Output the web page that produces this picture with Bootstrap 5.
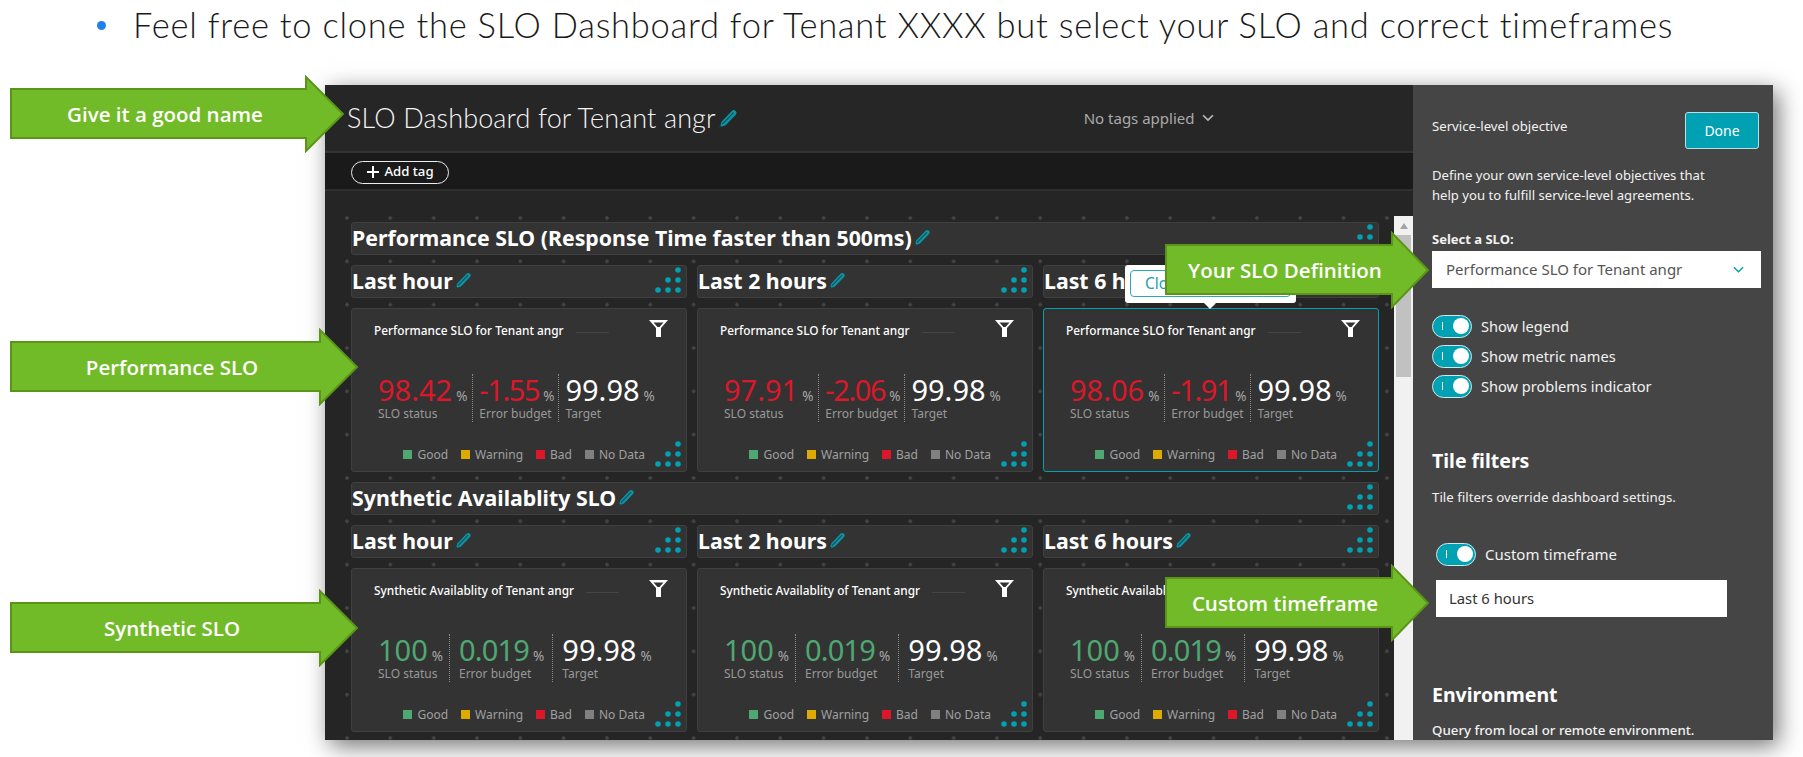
<!DOCTYPE html>
<html lang="en">
<head>
  <meta charset="UTF-8">
  <title>SLO Dashboard for Tenant</title>
  <link href="https://cdn.jsdelivr.net/npm/bootstrap@5.3.3/dist/css/bootstrap.min.css" rel="stylesheet">
  <style>
    body { font-family: "Noto Sans", sans-serif; background: #fff; width: 1803px; height: 757px; overflow: hidden; }
    .slide { position: relative; width: 1803px; height: 757px; overflow: hidden; }

    .slide-title { height: 85px; padding: 5px 0 0 97px; font-family: "Lato", sans-serif; font-weight: 300; font-size: 34.5px; line-height: 40px; color: #1a1a1a; letter-spacing: .75px; }
    .slide-bullet { width: 9px; height: 9px; border-radius: 50%; background: #1f7fef; margin: 16px 27px 0 0; }

    .dash-window { width: 1448px; height: 655px; margin-left: 325px; box-shadow: 5px 6px 22px rgba(0,0,0,.55); overflow: hidden; }
    .dash-main { width: 1088px; background: #252525; }
    .dash-head { height: 68px; background: #262626; border-bottom: 2px solid #333; padding: 0 0 0 22px; }
    .dash-name { font-family: "Lato", sans-serif; font-weight: 300; font-size: 27px; color: #f4f4f4; letter-spacing: .12px; }
    .dash-head .pencil { width: 19px; height: 19px; margin-left: 3px; }
    .tags-label { font-size: 15px; color: #aaa; margin-left: 346px; }
    .dash-tagbar { height: 38px; background: #1a1a1a; border-bottom: 2px solid #2f2f2f; padding: 2px 0 0 26px; }
    .add-tag { height: 23px; width: 98px; border: 1px solid #eee; border-radius: 12px; color: #fff; font-size: 13.2px; font-weight: 500; }

    .dash-body { height: 549px; }
    .board { width: 1069px; padding: 31px 0 0 26px; overflow: hidden;
      background-color: #252525;
      background-image: radial-gradient(circle, #444 1.5px, transparent 2px);
      background-size: 43.33px 43.33px; background-position: .33px 5.33px; }
    .tile-grid { display: grid; grid-template-columns: repeat(3, 336px); gap: 10px; }
    .tile-box { position: relative; background: #333; border: 1px solid #404040; border-radius: 3px; }
    .tile-wide { grid-column: 1 / 4; }
    .tile-label { height: 33px; padding: 0 0 2px 0; color: #fff; font-size: 21.3px; font-weight: 700; white-space: nowrap; }
    .tile-slo { height: 164px; padding: 12px 0 8px 26px; }
    .tile-active { border-color: #00a1b2; }
    .grip { position: absolute; right: 5px; bottom: 4px; width: 26px; height: 26px; }
    .pencil { width: 17px; height: 17px; margin-left: 2px; flex: none; }

    .slo-head { height: 20px; margin-left: -4px; color: #fff; font-size: 11.85px; font-weight: 500; white-space: nowrap; }
    .slo-rule { width: 33px; height: 1px; background: #454545; margin: 3px 0 0 12px; }
    .slo-funnel { position: absolute; right: 18px; top: 11px; width: 19px; height: 17px; }
    .slo-stats { margin-top: 33px; height: 48px; }
    .stat-cell { padding-right: 5px; padding-left: 6px; border-right: 1px dotted #8a8a8a; }
    .stat-cell:first-child { padding-left: 0; }
    .stat-cell:nth-child(2) { padding-right: 4px; }
    .stat-cell:last-child { border-right: 0; }
    .stats-good .stat-cell, .stats-good .stat-cell:nth-child(2) { padding-left: 9px; padding-right: 8px; }
    .stats-good .stat-cell:first-child { padding-left: 0; padding-right: 6px; }
    .stat-num { font-size: 29px; line-height: 32px; white-space: nowrap; }
    .stat-cell:nth-child(2) .stat-num { letter-spacing: -1.4px; }
    .stats-good .stat-cell:nth-child(2) .stat-num { letter-spacing: -.8px; }
    .stat-cell .stat-num .stat-unit { font-size: 13.5px; line-height: 1; color: #a8a8a8; margin-left: 4px; letter-spacing: 0; }
    .stat-name { font-size: 12px; line-height: 16px; color: #999; white-space: nowrap; }
    .is-bad { color: #dc172a; }
    .is-good { color: #4fa871; }
    .is-plain { color: #fff; }
    .slo-legend { margin-top: auto; height: 16px; padding-right: 41px; font-size: 12px; color: #a0a0a0; gap: 13px; }
    .swatch { display: inline-block; width: 9px; height: 9px; margin-right: 5px; }

    .tile-pop { position: absolute; left: 81px; top: -44px; width: 171px; height: 38px; background: #fff; border-radius: 3px; padding: 5px; z-index: 2; }
    .tile-pop::after { content: ""; position: absolute; left: 79px; bottom: -6px; border: 6px solid transparent; border-top-color: #fff; border-bottom: 0; }
    .tile-pop-btn { height: 27px; border: 1.5px solid #29a9ba; border-radius: 4px; color: #1f9fb0; font-size: 15.5px; padding-left: 14px; line-height: 24px; }

    .scroll-track { width: 19px; margin-top: 25px; background: #f1f1f1; }
    .scroll-up { height: 19px; }
    .scroll-up::before { content: ""; border: 4px solid transparent; border-bottom: 6px solid #a3a3a3; border-top: 0; }
    .scroll-thumb { height: 142px; margin: 0 2px; background: #c1c1c1; }

    .side-panel { width: 360px; background: #454545; color: #f2f2f2; padding: 27px 14px 0 19px; font-size: 13.3px; overflow: hidden; }
    .side-top { height: 37px; }
    .side-top-label { margin-bottom: 7px; font-size: 13.2px; }
    .btn-done { width: 74px; height: 37px; padding: 0; background: #00a1b2; border: 1px solid #b9e0e5; border-radius: 3px; color: #fff; font-size: 14px; }
    .side-text { line-height: 19.5px; margin: 0; }
    .side-intro { margin-top: 17px; font-size: 13.1px; }
    .side-label { font-weight: 700; font-size: 13px; margin-top: 25px; line-height: 18px; }
    .slo-select { height: 37px; margin-top: 3px; width: 329px; border: 0; border-radius: 0; padding: 0 14px; font-size: 15px; color: #555;
      background-image: url("data:image/svg+xml,%3csvg xmlns='http://www.w3.org/2000/svg' viewBox='0 0 12 8'%3e%3cpath fill='none' stroke='%2300a1b2' stroke-width='1.6' d='M1 1l5 5 5-5'/%3e%3c/svg%3e");
      background-position: right 17px center; background-size: 11px 8px; }
    .toggle-row { height: 23px; margin-bottom: 7px; gap: 9px; font-size: 14.6px; }
    .dt-toggle { position: relative; width: 40px; height: 23px; border-radius: 12px; background: #00a1b2; border: 1.5px solid #cfe9ec; flex: none; }
    .dt-toggle::before { content: ""; position: absolute; left: 9px; top: 6px; width: 1px; height: 8px; background: #fff; }
    .dt-toggle::after { content: ""; position: absolute; right: 2px; top: 2px; width: 16px; height: 16px; border-radius: 50%; background: #fff; }
    .side-heading { font-size: 19.5px; font-weight: 700; color: #fff; line-height: 28px; margin: 0; }
    .time-input { width: 291px; height: 37px; margin: 14px 0 0 4px; border: 0; border-radius: 0; padding: 0 13px; font-size: 14.8px; color: #333; }
    .toggle-first { margin-top: 27px; }
    .heading-tile { margin-top: 49px; }
    .text-tile { margin-top: 13px; }
    .toggle-custom { margin: 35px 0 0 4px; font-size: 15px; }
    .heading-env { margin-top: 64px; }
    .text-env { margin-top: 12px; }

    .callout { position: absolute; height: 78px; z-index: 5; }
    .callout svg { position: absolute; left: 0; top: 0; width: 100%; height: 100%; }
    .callout-text { position: absolute; left: 0; right: 25px; top: 0; bottom: 0; color: #fff; font-family: "Open Sans", sans-serif; font-weight: 600; font-size: 20.5px; }
    .callout-name { left: 10px; top: 75px; width: 335px; }
    .callout-perf { left: 10px; top: 328px; width: 349px; }
    .callout-syn { left: 10px; top: 589px; width: 349px; }
    .callout-def { left: 1165px; top: 231px; width: 265px; }
    .callout-time { left: 1165px; top: 564px; width: 265px; }
  </style>
</head>
<body>
  <div class="slide">
    <div class="slide-title d-flex">
      <span class="slide-bullet"></span>
      <span>Feel free to clone the SLO Dashboard for Tenant XXXX but select your SLO and correct timeframes</span>
    </div>

    <div class="dash-window d-flex">
      <div class="dash-main">
        <div class="dash-head d-flex align-items-center">
          <span class="dash-name">SLO Dashboard for Tenant angr</span>
          <svg class="pencil" viewBox="0 0 16 16"><use href="#pencil-icon"/></svg>
          <span class="tags-label d-flex align-items-center gap-2">No tags applied
            <svg width="12" height="8" viewBox="0 0 11 7"><path fill="none" stroke="#bbb" stroke-width="1.5" d="M1 1l4.500 4.500L10 1"/></svg>
          </span>
        </div>
        <div class="dash-tagbar d-flex align-items-center">
          <div class="add-tag d-flex align-items-center justify-content-center gap-1">
            <svg width="14" height="14" viewBox="0 0 14 14"><path stroke="#fff" stroke-width="2" d="M7 1v12M1 7h12"/></svg>
            Add tag
          </div>
        </div>
        <div class="dash-body d-flex">
          <div class="board">
            <div class="tile-grid" id="tiles"></div>
          </div>
          <div class="scroll-track">
            <div class="scroll-up d-flex align-items-center justify-content-center"></div>
            <div class="scroll-thumb"></div>
          </div>
        </div>
      </div>

      <div class="side-panel">
        <div class="side-top d-flex justify-content-between align-items-center">
          <span class="side-top-label">Service-level objective</span>
          <button type="button" class="btn btn-done">Done</button>
        </div>
        <p class="side-text side-intro">Define your own service-level objectives that<br>help you to fulfill service-level agreements.</p>
        <div class="side-label">Select a SLO:</div>
        <select class="form-select slo-select"><option>Performance SLO for Tenant angr</option></select>
        <div class="toggle-row d-flex align-items-center toggle-first"><span class="dt-toggle"></span>Show legend</div>
        <div class="toggle-row d-flex align-items-center"><span class="dt-toggle"></span>Show metric names</div>
        <div class="toggle-row d-flex align-items-center"><span class="dt-toggle"></span>Show problems indicator</div>
        <h2 class="side-heading heading-tile">Tile filters</h2>
        <p class="side-text text-tile">Tile filters override dashboard settings.</p>
        <div class="toggle-row d-flex align-items-center toggle-custom"><span class="dt-toggle"></span>Custom timeframe</div>
        <input class="form-control time-input" value="Last 6 hours">
        <h2 class="side-heading heading-env">Environment</h2>
        <p class="side-text text-env fw-medium">Query from local or remote environment.</p>
      </div>
    </div>

    <div class="callout callout-name">
      <svg viewBox="0 0 335 78"><polygon points="1,14 296,14 296,2 333,39 296,76 296,63 1,63" fill="#72bb28" stroke="#5b9419" stroke-width="2"/></svg>
      <div class="callout-text d-flex align-items-center justify-content-center">Give it a good name</div>
    </div>
    <div class="callout callout-perf">
      <svg viewBox="0 0 349 78"><polygon points="1,14 310,14 310,2 347,39 310,76 310,63 1,63" fill="#72bb28" stroke="#5b9419" stroke-width="2"/></svg>
      <div class="callout-text d-flex align-items-center justify-content-center">Performance SLO</div>
    </div>
    <div class="callout callout-syn">
      <svg viewBox="0 0 349 78"><polygon points="1,14 310,14 310,2 347,39 310,76 310,63 1,63" fill="#72bb28" stroke="#5b9419" stroke-width="2"/></svg>
      <div class="callout-text d-flex align-items-center justify-content-center">Synthetic SLO</div>
    </div>
    <div class="callout callout-def">
      <svg viewBox="0 0 265 78"><polygon points="1,14 227,14 227,2 263,39 227,76 227,63 1,63" fill="#72bb28" stroke="#5b9419" stroke-width="2"/></svg>
      <div class="callout-text d-flex align-items-center justify-content-center">Your SLO Definition</div>
    </div>
    <div class="callout callout-time">
      <svg viewBox="0 0 265 78"><polygon points="1,14 227,14 227,2 263,39 227,76 227,63 1,63" fill="#72bb28" stroke="#5b9419" stroke-width="2"/></svg>
      <div class="callout-text d-flex align-items-center justify-content-center">Custom timeframe</div>
    </div>
  </div>

  <svg width="0" height="0" class="position-absolute">
    <symbol id="pencil-icon" viewBox="0 0 16 16">
      <path fill="#0d93a3" d="M.5 15.500l1.800-5L10.800 1.600c1-1 2.200-1 3.200 0s1.100 2.200 .1 3.200L5.600 13.600z"/>
      <path stroke="#07505a" stroke-width="1" d="M2.800 12.800L12.300 3"/>
      <path fill="#063f47" d="M.5 15.500l.7-2 1.300 1.300z"/>
    </symbol>
    <symbol id="grip-icon" viewBox="0 0 26 26">
      <g fill="#00a1b2">
        <circle cx="23" cy="3" r="2.8"/>
        <circle cx="13" cy="13" r="2.8"/><circle cx="23" cy="13" r="2.8"/>
        <circle cx="3" cy="23" r="2.8"/><circle cx="13" cy="23" r="2.8"/><circle cx="23" cy="23" r="2.8"/>
      </g>
    </symbol>
  </svg>

  <script src="https://cdn.jsdelivr.net/npm/bootstrap@5.3.3/dist/js/bootstrap.bundle.min.js"></script>
  <script>
    const pencil = '<svg class="pencil" viewBox="0 0 16 16"><use href="#pencil-icon"/></svg>';
    const grip = '<svg class="grip" viewBox="0 0 26 26"><use href="#grip-icon"/></svg>';
    const funnel = '<svg class="slo-funnel" viewBox="0 0 19 17"><path fill="#fff" fill-rule="evenodd" d="M0 0h19l-7 8v9H7V8zM4.500 2.500l4 4.500h2l4-4.500z"/></svg>';
    const times = ['Last hour', 'Last 2 hours', 'Last 6 hours'];

    const groups = [
      { heading: 'Performance SLO (Response Time faster than 500ms)', name: 'Performance SLO for Tenant angr', tone: 'is-bad', cells: '',
        stats: [['98.42', '-1.55'], ['97.91', '-2.06'], ['98.06', '-1.91']] },
      { heading: 'Synthetic Availablity SLO', name: 'Synthetic Availablity of Tenant angr', tone: 'is-good', cells: 'stats-good',
        stats: [['100', '0.019'], ['100', '0.019'], ['100', '0.019']] }
    ];

    function labelTile(text, wide) {
      return `<div class="tile-box tile-label d-flex align-items-center ${wide ? 'tile-wide' : ''}">${text}${pencil}${grip}</div>`;
    }

    function statCell(value, label, tone) {
      return `<div class="stat-cell">
        <div class="stat-num ${tone}">${value}<span class="stat-unit">%</span></div>
        <div class="stat-name">${label}</div>
      </div>`;
    }

    function sloTile(group, stat, active) {
      const legend = [['#4fa871', 'Good'], ['#dcaa00', 'Warning'], ['#dc172a', 'Bad'], ['#808080', 'No Data']]
        .map(([color, text]) => `<span><span class="swatch" style="background:${color}"></span>${text}</span>`).join('');
      const pop = active ? '<div class="tile-pop"><div class="tile-pop-btn">Close</div></div>' : '';
      return `<div class="tile-box tile-slo d-flex flex-column ${active ? 'tile-active' : ''}">
        ${pop}
        <div class="slo-head d-flex align-items-center">${group.name}<span class="slo-rule"></span></div>
        ${funnel}
        <div class="slo-stats d-flex ${group.cells}">
          ${statCell(stat[0], 'SLO status', group.tone)}
          ${statCell(stat[1], 'Error budget', group.tone)}
          ${statCell('99.98', 'Target', 'is-plain')}
        </div>
        <div class="slo-legend d-flex align-items-center justify-content-end">${legend}</div>
        ${grip}
      </div>`;
    }

    document.getElementById('tiles').innerHTML = groups.map((group, g) =>
      labelTile(group.heading, true) +
      times.map(t => labelTile(t, false)).join('') +
      group.stats.map((stat, i) => sloTile(group, stat, g === 0 && i === 2)).join('')
    ).join('');
  </script>
</body>
</html>
